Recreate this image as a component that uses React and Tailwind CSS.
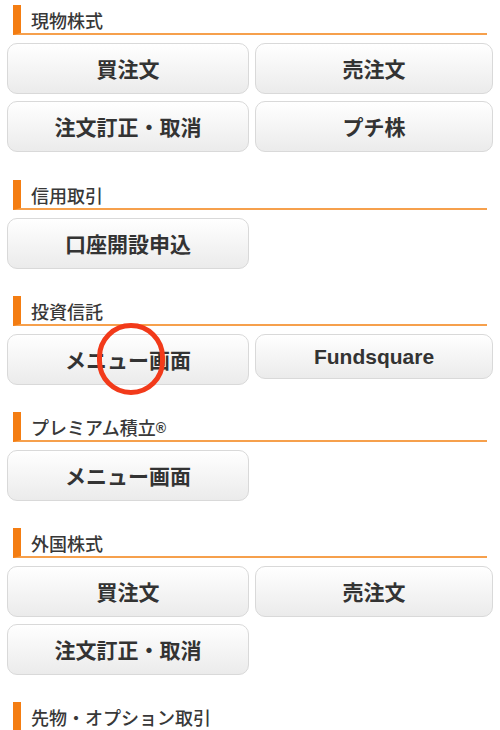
import React from "react";

const sections = [
  { title: "現物株式", rows: [["買注文", "売注文"], ["注文訂正・取消", "プチ株"]] },
  { title: "信用取引", rows: [["口座開設申込"]] },
  { title: "投資信託", rows: [["メニュー画面", "Fundsquare"]], circle: true },
  { title: "プレミアム積立", reg: true, rows: [["メニュー画面"]] },
  { title: "外国株式", rows: [["買注文", "売注文"], ["注文訂正・取消"]] },
  { title: "先物・オプション取引", rows: [] },
];

function Header({ title, reg }) {
  return (
    <div className="mx-[13px] h-[30px] flex items-center border-l-[8px] border-l-[#f47d12] border-b-2 border-b-[#f6a04c] pl-[10px] pt-[1px]">
      <span className="text-[18px] font-medium text-[#383838] leading-none">
        {title}
        {reg && (
          <span className="text-[14px] font-bold align-[2px] font-['Liberation_Sans',sans-serif]">®</span>
        )}
      </span>
    </div>
  );
}

function MenuButton({ label, short }) {
  const latin = /^[A-Za-z]/.test(label);
  return (
    <button
      className={
        "w-full rounded-[10px] border border-[#d9d9d9] bg-gradient-to-b from-white to-[#ebebeb] text-[#333] font-bold flex items-center justify-center text-[21px] " +
        (short ? "h-[45px]" : "h-[51px]")
      }
      style={latin ? { fontFamily: '"Liberation Sans", Arial, sans-serif' } : undefined}
    >
      {label}
    </button>
  );
}

export default function App() {
  return (
    <div
      className="w-[500px] h-[730px] overflow-hidden bg-white pt-[5px]"
      style={{ fontFamily: '"Noto Sans CJK JP", "Noto Sans", sans-serif' }}
    >
      {sections.map((s, idx) => (
        <div key={s.title} className={idx === 0 ? "mb-[28px]" : "mb-[27px]"}>
          <Header title={s.title} reg={s.reg} />
          {s.rows.length > 0 && (
            <div className="px-[7px] mt-[8px] flex flex-col gap-[7px]">
              {s.rows.map((row, i) => (
                <div key={i} className="grid grid-cols-[242px_1fr] gap-[6px] items-start">
                  {row.map((label) => (
                    <div key={label} className="relative">
                      <MenuButton label={label} short={label === "Fundsquare"} />
                      {s.circle && label === "メニュー画面" && (
                        <div className="absolute left-[90px] top-[-11px] w-[68px] h-[72px] rounded-full border-[5px] border-[#f23a1a]" />
                      )}
                    </div>
                  ))}
                </div>
              ))}
            </div>
          )}
        </div>
      ))}
    </div>
  );
}
